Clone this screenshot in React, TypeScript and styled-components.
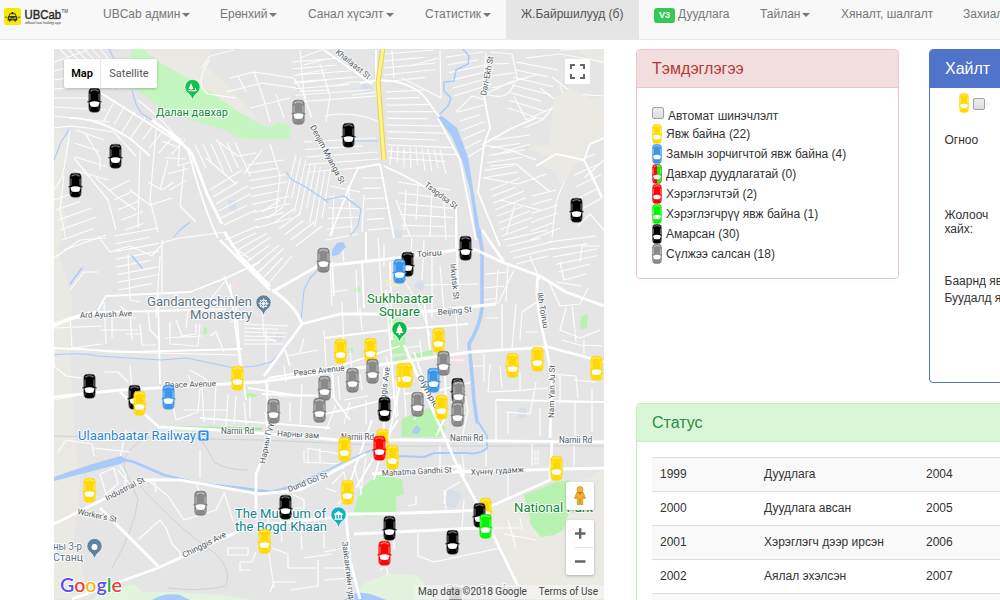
import React from "react";
import styled, { createGlobalStyle } from "styled-components";

const GlobalStyle = createGlobalStyle`
  * { box-sizing: border-box; }
  body {
    margin: 0;
    overflow: hidden;
    background: #fff;
    color: #333;
    font: 12px/17px "Liberation Sans", Arial, sans-serif;
  }
`;

const Page = styled.div`
  width: 1000px;
  height: 600px;
  overflow: hidden;
`;

/* ---------- navigation ---------- */

const Navbar = styled.nav`
  display: flex;
  height: 40px;
  overflow: hidden;
  background: #f8f8f8;
  border-bottom: 1px solid #e7e7e7;
`;

const Brand = styled.a`
  display: flex;
  flex: 0 0 88px;
  padding: 8px 0 0 4px;
`;

const NavItem = styled.a<{ $width: number; $active?: boolean }>`
  display: flex;
  flex: 0 0 ${(p) => p.$width}px;
  align-items: flex-start;
  padding: 6px 0 0 15px;
  white-space: nowrap;
  color: ${(p) => (p.$active ? "#555" : "#777")};
  background: ${(p) => (p.$active ? "#e5e5e5" : "transparent")};
`;

const Caret = styled.span`
  margin: 7px 0 0 2px;
  border: 4px solid transparent;
  border-top-color: #777;
  border-bottom: 0;
`;

const Badge = styled.span`
  width: 21px;
  height: 15px;
  margin: 2px 3px 0 0;
  border-radius: 3px;
  background: #33c955;
  color: #fff;
  font-size: 9px;
  font-weight: 700;
  line-height: 15px;
  text-align: center;
`;

/* ---------- page body ---------- */

const Main = styled.main`
  display: flex;
  gap: 32px;
  padding: 9px 0 0 54px;
`;

const MapBox = styled.section`
  position: relative;
  flex: 0 0 550px;
  height: 551px;
  overflow: hidden;
  background: #e5e5e5;
  font-family: Roboto, sans-serif;
`;

const MapCanvas = styled.svg`
  display: block;
`;

const Control = styled.div`
  position: absolute;
  display: flex;
  align-items: center;
  justify-content: center;
  background: #fff;
  border-radius: 2px;
  box-shadow: 0 1px 3px rgba(0, 0, 0, 0.24);
`;

const MapTypes = styled(Control)`
  left: 10px;
  top: 10px;
  height: 29px;
  font-size: 11px;
`;

const MapType = styled.span<{ $active?: boolean; $width: number }>`
  width: ${(p) => p.$width}px;
  line-height: 29px;
  text-align: center;
  color: ${(p) => (p.$active ? "#000" : "#565656")};
  font-weight: ${(p) => (p.$active ? 600 : 400)};
  & + & {
    border-left: 1px solid #e8e8e8;
  }
`;

const Fullscreen = styled(Control)`
  left: 511px;
  top: 10px;
  width: 25px;
  height: 25px;
  border-radius: 0;
  box-shadow: none;
`;

const Pegman = styled(Control)`
  left: 512px;
  top: 433px;
  width: 28px;
  height: 28px;
`;

const ZoomBar = styled(Control)`
  left: 512px;
  top: 471px;
  width: 28px;
  height: 55px;
`;

const Attribution = styled.div`
  position: absolute;
  right: 0;
  bottom: 1px;
  display: flex;
  justify-content: space-between;
  width: 190px;
  height: 14px;
  padding: 0 6px 0 4px;
  background: rgba(245, 245, 245, 0.7);
  color: #444;
  font-size: 10px;
  line-height: 14px;
  white-space: nowrap;
`;

const Side = styled.div`
  flex: 0 0 520px;
`;

const TopRow = styled.div`
  display: flex;
  align-items: flex-start;
  gap: 30px;
  margin-bottom: 20px;
`;

type Tone = "danger" | "primary" | "success";
const tones: Record<Tone, { bg: string; fg: string; line: string }> = {
  danger: { bg: "#f2dede", fg: "#b33a38", line: "#efc4ce" },
  primary: { bg: "#5074ca", fg: "#ffffff", line: "#5074ca" },
  success: { bg: "#d9f6d6", fg: "#2f8a43", line: "#c5efb9" },
};

const Panel = styled.section<{ $tone: Tone; $width: number; $height: number }>`
  flex: none;
  width: ${(p) => p.$width}px;
  height: ${(p) => p.$height}px;
  overflow: hidden;
  border: 1px solid ${(p) => tones[p.$tone].line};
  border-radius: 4px;
`;

const PanelTitle = styled.h3<{ $tone: Tone }>`
  height: 38px;
  margin: 0;
  padding: 0 15px;
  border-bottom: 1px solid ${(p) => tones[p.$tone].line};
  background: ${(p) => tones[p.$tone].bg};
  color: ${(p) => tones[p.$tone].fg};
  font-size: 16px;
  font-weight: 400;
  line-height: 38px;
`;

const LegendList = styled.div`
  padding: 17px 15px;
`;

const LegendRow = styled.div`
  display: flex;
  align-items: center;
  gap: 4px;
  height: 20px;
  line-height: 20px;
`;

const CheckRow = styled.label`
  display: flex;
  gap: 4px;
  height: 19px;
  line-height: 23px;
`;

const Check = styled.span`
  flex: none;
  width: 12px;
  height: 12px;
  margin-top: 2px;
  border: 1px solid #a3a3a3;
  border-radius: 2px;
  background: linear-gradient(#eee, #dcdcdc);
`;

const SearchBody = styled.div`
  padding: 5px 14.500px;
  line-height: 14px;
`;

const SearchIcons = styled.div`
  display: flex;
  align-items: center;
  gap: 4px;
  height: 20px;
  padding-left: 14px;
`;

const Field = styled.div<{ $gap: number }>`
  width: 60px;
  margin-top: ${(p) => p.$gap}px;
  white-space: pre;
`;

const TableWrap = styled.div`
  padding: 15px;
`;

const StatusRow = styled.div`
  display: grid;
  grid-template-columns: 104px 162px 1fr;
  height: 34px;
  padding-left: 8px;
  border-top: 1px solid #ddd;
  line-height: 32px;
  &:nth-child(odd) {
    background: #f9f9f9;
  }
`;

/* ---------- cars ---------- */

const paint = {
  yellow: "#ffd900",
  blue: "#3d96e8",
  red: "#fb0505",
  green: "#06f506",
  black: "#000000",
  gray: "#8a8a8a",
};
type Colour = keyof typeof paint;

function CarShape({ colour, second }: { colour: Colour; second?: Colour }) {
  const c = paint[colour];
  const dark = colour === "black" || colour === "gray";
  return (
    <g>
      <path d="M0 13.800h14" stroke={c} strokeWidth="1.200" />
      <path
        d="M3 .6Q7-.3 11 .6Q12.700 1.400 12.700 4V20Q12.700 23 11 23.800Q7 24.800 3 23.800Q1.300 23 1.300 20V4Q1.300 1.400 3 .6Z"
        fill={c}
        stroke={dark ? "#555" : c}
        strokeWidth=".5"
      />
      {second && <path d="M7 .3Q12.700 0 12.700 4V20Q12.700 24.400 7 24.400Z" fill={paint[second]} />}
      <path d="M3.400 3.600V2.400Q7 1.200 10.600 2.400V3.600" fill="none" stroke="#fff" strokeOpacity=".7" strokeWidth=".8" />
      <path d="M2.500 5.500V12.500M11.500 5.500V12.500" stroke="#fff" strokeOpacity=".6" strokeWidth=".8" />
      <path d="M2.500 19V21.500M11.500 19V21.500" stroke="#fff" strokeOpacity=".45" strokeWidth=".7" />
      <path d="M1.900 14.400Q7 12 12.100 14.400L10.800 18.600Q7 19.200 3.200 18.600Z" fill="#fff" />
    </g>
  );
}

function CarIcon({ colour, second }: { colour: Colour; second?: Colour }) {
  return (
    <svg width="10" height="20" viewBox=".6 -.3 12.800 25.200" preserveAspectRatio="none">
      <CarShape colour={colour} second={second} />
    </svg>
  );
}

const cars: [Colour, number, number][] = [
  ["black", 94, 100], ["black", 115, 156], ["black", 75, 185], ["gray", 298, 112],
  ["black", 348, 135], ["black", 576, 210], ["black", 465, 248], ["gray", 323, 260],
  ["black", 407, 264], ["blue", 399, 271], ["yellow", 438, 340], ["yellow", 340, 351],
  ["yellow", 370, 350], ["yellow", 537, 359], ["gray", 443, 363], ["yellow", 512, 365],
  ["yellow", 596, 368], ["gray", 372, 371], ["yellow", 402, 375], ["yellow", 406, 375],
  ["yellow", 237, 378], ["gray", 352, 380], ["blue", 433, 380], ["black", 89, 386],
  ["gray", 324, 388], ["black", 457, 390], ["gray", 458, 393], ["black", 134, 397],
  ["blue", 168, 397], ["yellow", 139, 403], ["gray", 417, 404], ["yellow", 441, 407],
  ["black", 384, 409], ["gray", 319, 410], ["gray", 273, 411], ["gray", 457, 414],
  ["yellow", 382, 441], ["red", 379, 448], ["yellow", 344, 449], ["yellow", 392, 457],
  ["yellow", 556, 468], ["yellow", 89, 490], ["yellow", 347, 492], ["gray", 200, 503],
  ["black", 285, 507], ["yellow", 485, 510], ["black", 479, 515], ["green", 485, 526],
  ["black", 389, 528], ["yellow", 264, 541], ["black", 452, 542], ["red", 384, 553],
  ["gray", 455, 599],
];

/* ---------- map geometry ---------- */

// A block of side lanes: n lines between side A-B and side C-D.
const lanes = (a: number[], b: number[], c: number[], d: number[], n: number) => {
  let out = "";
  for (let i = 0; i < n; i++) {
    const t = n === 1 ? 0 : i / (n - 1);
    const x1 = a[0] + (b[0] - a[0]) * t;
    const y1 = a[1] + (b[1] - a[1]) * t;
    const x2 = c[0] + (d[0] - c[0]) * t;
    const y2 = c[1] + (d[1] - c[1]) * t;
    const k = i % 3 === 1 ? 0.8 : 1;
    out += `M${x1.toFixed(1)} ${y1.toFixed(1)}L${(x1 + (x2 - x1) * k).toFixed(1)} ${(y1 + (y2 - y1) * k).toFixed(1)}`;
  }
  return out;
};

const districts = [
  lanes([54, 62], [54, 116], [88, 50], [110, 122], 7),
  lanes([60, 49], [100, 49], [100, 90], [134, 88], 6),
  lanes([115, 100], [185, 140], [102, 124], [168, 158], 8),
  lanes([195, 145], [235, 142], [206, 168], [250, 176], 6),
  lanes([210, 190], [224, 225], [242, 170], [256, 210], 6),
  lanes([247, 165], [256, 228], [284, 160], [292, 218], 9),
  lanes([296, 155], [330, 172], [284, 205], [320, 230], 8),
  lanes([262, 212], [296, 246], [280, 200], [322, 226], 7),
  lanes([54, 200], [64, 250], [82, 190], [106, 235], 6),
  lanes([110, 190], [125, 230], [130, 180], [148, 222], 5),
  lanes([115, 236], [118, 290], [158, 228], [160, 282], 8),
  lanes([225, 240], [268, 284], [258, 226], [292, 256], 9),
  lanes([292, 62], [296, 102], [340, 58], [376, 96], 7),
  lanes([324, 49], [330, 90], [300, 58], [292, 92], 5),
  lanes([304, 142], [308, 172], [376, 138], [380, 166], 5),
  lanes([386, 92], [388, 158], [424, 90], [460, 162], 11),
  lanes([392, 146], [440, 150], [390, 165], [446, 174], 9),
  lanes([384, 54], [384, 82], [434, 50], [436, 76], 5),
  lanes([446, 57], [454, 96], [484, 52], [492, 84], 6),
  lanes([458, 112], [466, 158], [484, 105], [486, 146], 6),
  lanes([490, 52], [492, 88], [512, 54], [516, 82], 4),
  lanes([516, 62], [508, 108], [558, 70], [544, 120], 7),
  lanes([494, 140], [482, 178], [530, 135], [518, 172], 6),
  lanes([490, 190], [502, 236], [520, 178], [534, 224], 8),
  lanes([532, 196], [530, 240], [556, 190], [560, 228], 6),
  lanes([570, 152], [580, 210], [600, 140], [602, 198], 6),
  lanes([504, 240], [516, 264], [548, 230], [556, 254], 5),
  lanes([548, 242], [558, 272], [596, 236], [598, 262], 5),
  lanes([244, 324], [244, 344], [288, 326], [284, 344], 6),
  lanes([362, 178], [368, 230], [384, 178], [390, 228], 6),
  lanes([398, 182], [402, 236], [450, 190], [456, 236], 6),
  lanes([330, 186], [326, 240], [360, 192], [358, 234], 6),
  lanes([560, 50], [570, 110], [604, 48], [560, 86], 3),
  lanes([160, 125], [170, 190], [182, 140], [190, 178], 5),
  lanes([76, 130], [74, 170], [104, 140], [108, 180], 4),
].join("");

const minorRoads = [
  "M54 128L70 126 88 128 114 132 136 156M70 130Q66 160 62 178L54 190M74 158L108 200 116 230M85 133L100 158 100 170",
  "M64 176L60 210 66 240M96 178L116 196 136 210M140 150L138 228M156 130L150 200 158 232M168 160L160 190M180 140L178 166 196 160",
  "M138 100Q164 120 188 150M148 182L162 190 174 182M130 190L150 205 172 198M184 165L180 206 196 222M206 158L236 184M216 140L238 156 256 153",
  "M270 144L280 176 276 212M262 150L244 174M202 68L210 56 234 50M202 88L208 94 236 98M230 78L254 72 294 78 306 98M238 76L246 92M254 72L264 100 270 122",
  "M210 60Q198 76 202 88M226 92L262 83 296 88M250 108L290 98M276 94L284 118M300 50L304 96 312 118M320 64L330 96 326 122",
  "M324 116Q352 110 380 122M336 86L350 82 374 82M352 95L376 92M392 50L394 78M410 66L438 58M440 50L441 98L402 78",
  "M456 112L472 96 486 100M512 54L518 82M486 52L482 96 510 82 540 74M486 94Q508 102 514 84M526 58L560 54 604 62M540 88L558 102 542 120 524 128",
  "M514 96L526 120 552 108M552 77L574 94 604 96M576 160L568 172 556 202 552 238M604 160L584 178M590 170L602 196M578 226L590 214 604 230",
  "M485 145L510 150 536 160M494 155L530 144M484 178L518 184 546 174M500 200L540 210M490 166L516 164 550 192M515 205L506 235",
  "M334 195L332 236M348 185L352 232M364 195L362 232M396 200L410 236M406 190L404 230M418 184L416 220M432 190L430 236M444 202L446 240",
  "M54 258L80 240 106 238M70 290L84 272 98 272M98 236L110 252 130 246 152 256 164 242 180 238 226 232 232 246 252 260 M162 240L162 292M226 280L210 300 190 305",
  "M128 254L130 300 140 302M160 256L156 318M70 316L72 348 102 344M54 328L102 326M78 348L110 352 242 355M104 302L106 344M120 306L130 314 132 340",
  "M140 324L142 345 156 345M148 312L150 330 160 340M176 320L182 336 196 334 196 324M170 322L170 344 198 346 200 324M210 336L216 332 224 352M100 330L138 330M54 348L54 366 66 376 82 378",
  "M112 310L112 338M122 318L136 318M126 334L142 334M165 338L202 336M174 310L212 309M188 310L186 328M230 322L244 318M262 308L264 336 276 342M266 330L266 365",
  "M54 400L76 396M130 365L132 390M104 372L118 372 128 382M188 375L192 384M190 370L204 378 208 382M172 400L176 420 198 412 200 388M202 386L204 422M216 384L214 424M184 410L228 410M228 394L226 426M236 396L234 424M244 402L246 424",
  "M250 396L250 418M268 384L266 426M290 402L290 422M302 384L300 426M278 396L310 396M286 356L318 350M300 352L304 338M284 366L286 382M324 330L326 366M342 302L344 348M360 308L362 330 M330 266L332 306",
  "M330 292L348 290M356 270L358 316M378 238L382 300M384 244L384 266M342 242L344 264M412 238L410 268M424 240L422 280M432 250L432 318M440 266L444 310M456 310L458 350M424 285L478 284M404 280L422 310 430 336",
  "M498 270L496 304M508 264L506 302M514 270L498 304M486 274L508 272M484 288L504 286M484 300L498 298M502 304L502 350M516 304L512 348M486 318L498 318M548 280L560 306 580 304 588 288 M556 282L582 286M566 308L560 330 580 338 600 330",
  "M540 300L522 312 520 340M538 332L526 332M562 340L580 345 602 346M572 304L576 342M584 340L584 354M530 256L540 280M560 262L564 280 586 274M580 262L582 246 600 246",
  "M490 364L488 392 530 390M500 366L502 388M520 372L520 390M484 354L484 382M552 374L576 376 578 398M560 376L560 404M574 380L596 382M536 382L530 414 506 412M524 390L548 388M496 400L496 440M562 402L600 402M592 388L592 432M508 412L508 434M540 408L540 436M575 400L575 436",
  "M450 360L464 360M462 380L468 410 462 438M472 366L484 366M404 348L420 346M420 340L422 360M350 350L352 370M386 356L390 370M360 374L362 390M330 378L332 398M338 376L340 400M344 400L368 396M350 402L344 424M366 400L366 424M396 380L398 416M404 386L406 416M414 420L420 408M336 405L326 430",
  "M58 452L66 440 92 444 94 456M94 448L130 452M120 458L126 430M200 450L200 478M100 474L114 468 118 484 106 494ZM118 470L128 482M120 466L126 475 124 492M148 480L168 496 184 520 216 510 224 494M154 478L156 492M202 500L196 482",
  "M138 540L160 520 166 528 172 544 180 552 180 560M224 492L234 524M306 448L340 454M308 448L308 464M304 450L304 462 340 464M320 448L320 462M292 494L304 500 304 514M294 508L302 508M280 512L282 542M268 518L270 536",
  "M228 548L248 548 248 555 228 555ZM240 562L252 562 256 552M240 562L240 570 250 570M272 548L288 554 288 568 318 568M296 582L274 582 270 592M300 520L302 550M312 528L324 528 324 548M304 558L332 554M318 560L318 586 290 590M268 548L274 588",
  "M332 484L344 472 346 482M326 488L336 492M338 504L344 498M332 470L344 468M354 466L362 494M366 458L360 496M324 552L344 548M324 568L348 568M324 580L350 578M408 506L416 504 416 496M444 490L446 510M464 500L462 528M508 520L516 548",
  "M418 534L418 556 434 562 500 548 M444 504L446 490 460 482M480 528L522 528 520 518M394 550L394 534M504 534L536 540M380 570L386 566 388 574M462 452L464 470M440 446L440 470M486 446L486 466M508 468L508 500M532 444L532 466M574 446L574 466",
].join("");

const secondary = [
  "M54 324Q90 310 98 312L158 311 226 309M98 310L106 296 190 292 226 278 260 262M158 295L160 384M54 348L130 352 242 349",
  "M224 276L236 306 240 356 246 400M70 118Q100 118 132 140L150 156M188 150Q204 210 218 238M96 90L150 124 190 150",
  "M376 50L376 82 384 160M360 83Q400 74 424 96L440 118M324 50L372 84M380 164L394 238M384 166Q420 182 456 206L456 248M380 164L358 168 348 190 330 236",
  "M456 206L458 290M484 96L490 128 484 144 478 192 500 246M438 118L460 160 476 240M482 145L512 128 536 118M536 166L556 154 584 160 602 198M584 160L590 144 604 138",
  "M386 290L396 418M362 262L364 308M332 262L334 296M324 338L390 330 468 324M366 232L366 262M424 300L430 350M390 262L392 340",
  "M268 378L340 366 400 346M266 380L268 410M414 352L434 410M262 394L330 396M200 418L330 428M248 388L300 396M284 346L290 366",
  "M230 284L240 364M372 420L362 448 346 494M402 376L388 440M398 420L384 442 374 480M446 416L436 436M496 400L604 402M444 356L446 400",
  "M384 368L384 440 356 488M324 414L344 410 398 396M404 394L440 390 472 382M332 368L334 398 350 420",
].join("");

const mainRoads = [
  "M54 397L120 390 260 382 330 372 400 362 470 352 548 347 604 362",
  "M54 326Q70 318 100 312M318 266L272 292M272 290Q296 306 302 324L264 376M302 324L340 314 402 314 496 304",
  "M324 266L396 258 456 250 476 250 502 262 540 276 566 292 604 306M482 230L504 262M220 240L270 290",
  "M538 276Q534 300 546 346L552 380 550 438M224 232L240 256 270 286",
  "M160 427L220 430 340 440 400 440 604 442M54 524L110 496 140 480 180 480 260 494 300 490 340 468 366 454",
  "M266 412L270 440 256 474 256 520M100 508L158 566M72 599L158 568 250 526 346 516M346 516L350 560 360 599",
  "M346 514Q400 514 480 510L496 504 550 480 552 440M404 345L460 472 482 512M120 392L160 428",
  "M152 120Q180 140 192 154L208 196 222 224M354 534L480 528M450 472L604 468M372 474L460 466 464 476",
  "M482 512L518 586",
].join("");

type LabelData = [string, number, number, number, number];
// text, x, y, rotation, drawn length
const streetLabels: LabelData[] = [
  ["Khailaast St", 335, 53, 39, 42],
  ["Dari-Ekh St", 486, 96, -79, 40],
  ["Denjim Myanga St", 310, 127, 62, 65],
  ["Tsagdsa St", 424, 186, 37, 39],
  ["Ikh Toiruu", 403, 258, -4, 39],
  ["Irkutsk St", 450, 264, 84, 36],
  ["Ikh Toiruu", 537, 293, 80, 36],
  ["Nam Yan Ju St", 554, 418, -89, 53],
  ["Beijing St", 438, 315, -5, 34],
  ["Ard Ayush Ave", 80, 318, -2, 52],
  ["Peace Avenue", 165, 388, -2, 51],
  ["Peace Avenue", 294, 376, -6, 51],
  ["Chinggis Ave", 383, 417, -82, 50],
  ["Olympic St", 417, 377, 61, 48],
  ["Narnii Rd", 221, 434, 0, 33],
  ["Нарны зам", 277, 436, 3, 42],
  ["Нарны Гүүр", 265, 464, -79, 46],
  ["Narnii Rd", 341, 440, 0, 33],
  ["Narnii Rd", 450, 441, 0, 33],
  ["Narnii Rd", 559, 443, 0, 33],
  ["Dund Gol St", 289, 492, -21, 42],
  ["Industrial St", 107, 501, -27, 43],
  ["Worker's St", 77, 514, 12, 40],
  ["Chinggis Ave", 184, 558, -27, 48],
  ["Mahatma Gandhi St", 382, 476, -3, 70],
  ["Хүннү гудамж", 471, 475, -3, 53],
  ["Зайсангийн гудамж", 342, 542, 83, 74],
];

const placeLabels: [string, number, number, number, string, number][] = [
  ["Далан давхар", 156, 116, 72, "#0a8a38", 11],
  ["Gandantegchinlen", 147, 306, 105, "#5c7385", 13],
  ["Monastery", 190, 319, 62, "#5c7385", 13],
  ["Sukhbaatar", 367, 303, 66, "#0c8a34", 13],
  ["Square", 379, 316, 41, "#0c8a34", 13],
  ["Ulaanbaatar Railway", 78, 440, 118, "#2a84d2", 12.5],
  ["The Museum of", 235, 518, 91, "#12848f", 12.5],
  ["the Bogd Khaan", 235, 531, 92, "#12848f", 12.5],
  ["National Park", 514, 512, 79, "#0c8a34", 12.5],
  ["ны 3-р", 53, 550, 29, "#5c7385", 11.5],
  ["Станц", 53, 561, 30, "#5c7385", 11.5],
  ["River Garden", 446, 594, 74, "#8b9298", 12.5],
];

function Pin({ x, y, fill, children }: { x: number; y: number; fill: string; children: React.ReactNode }) {
  return (
    <g transform={`translate(${x} ${y})`}>
      <path
        d="M0 12Q-1.400 7-5.200 4.600A7.600 7.600 0 1 1 5.200 4.600Q1.400 7 0 12Z"
        fill={fill}
        stroke="#fff"
        strokeWidth=".6"
      />
      {children}
    </g>
  );
}

function CityMap() {
  return (
    <MapCanvas width="550" height="551" viewBox="54 49 550 551">
      <g fill="#ebe9e4">
        <path d="M142 49H212L206 66 232 90 262 123 240 113 160 66Z" />
        <path d="M54 126L70 140 66 160 60 182 66 220 58 250 72 300 70 350 74 430 80 480 74 540 90 599H54Z" />
        <path d="M576 49H604V66L590 60Z" />
        <path d="M604 469L590 478 554 484 494 507 488 534 500 548 521 590 524 600H604Z" />
      </g>
      <path
        fill="#c5f5c0"
        d="M132 49H142L161 63 204 88 241 113 262 126 271 127 277 122 290 125V139H254L240 138 224 130 200 123 164 110 134 88 129 61Z"
      />
      <g fill="#b7f2b0">
        <path d="M389 319H402L407 353 392 354ZM392 358L406 355 407 362 392 363ZM411 355L432 350 434 355 412 360ZM581 316L588 315 587 328 580 329Z" />
        <path d="M402 419L431 407 446 428 442 437H401Z" />
        <path d="M359 492L371 480 379 475 402 479 404 494 396 497V514L367 517 354 512Z" />
        <path d="M524 495L557 482 569 480V512L563 530 554 535 541 537 531 525Z" />
        <path d="M204 328L207 327 207 334 203 334ZM245 396L248 393 258 395 250 399ZM354 289L359 286 361 291 356 293ZM348 349L353 348 353 353 348 353Z" />
      </g>
      <g fill="#e2f3de">
        <path d="M357 600L361 585 387 574 417 575 428 588 434 600Z" />
        <path d="M92 600L104 589 134 584 142 592 177 592 221 595 254 600Z" />
      </g>
      <path d="M166 427L262 429" stroke="#a6eba0" strokeWidth="2.500" />
      <g fill="#f8dfe3">
        <path d="M231 280L235 283 240 279 237 285 240 290 235 287 231 290 232 285ZM171 353H177V358H171ZM455 355H461V364H455ZM54 334L57 336 54 339Z" />
      </g>
      <g fill="#d9dfe9">
        <path d="M362 84L372 86 370 93 360 91ZM228 200L236 200 238 213 229 210ZM394 230L402 230 402 238 394 238ZM418 280L426 284 422 291 414 287ZM445 487L462 494 456 508 444 506ZM518 408H526V418H518ZM276 334L284 334 282 341 274 340Z" />
      </g>
      <g fill="none" stroke="#cfd1d3" strokeWidth="1">
        <path d="M54 436L260 440 400 446 604 446" />
        <path d="M142 440Q118 456 126 472T138 500Q134 530 112 568M192 430Q206 444 214 462 226 470 248 470M140 486Q180 530 216 554 232 570 226 586 200 592 168 588" />
      </g>
      <g fill="none" stroke="#fdfdfd" strokeLinejoin="round">
        <path d={districts} strokeWidth="1.100" />
        <path d={minorRoads} strokeWidth="1.200" />
      </g>
      <path
        fill="#ebe9e4"
        d="M554 98L571 88 590 99 604 98V137L590 144 582 158 570 170 562 186 554 170 537 165 548 157 532 149 534 144 548 146 552 120Z"
      />
      <path d={secondary} fill="none" stroke="#fff" strokeWidth="1.800" strokeLinejoin="round" />
      <g fill="none" stroke="#a8cbfc" strokeLinejoin="round" strokeLinecap="round">
        <path
          strokeWidth="1.100"
          d="M109 49L113 57 116 62 128 78M132 90L136 104 141 113 152 120M54 160L61 142 69 130M54 355Q80 352 97 356L161 360 187 358 234 368 256 366 271 362 287 347M301 320L304 290 310 278 318 270M286 172L292 180 304 186 316 194 328 202M324 200L344 196 361 209 358 226 350 236M356 141L378 141M174 237L180 230 190 222"
        />
        <path strokeWidth="1.500" d="M463 49L469 56 468 64 456 70 454 81 444 82 444 91 451 98 448 106 440 114M70 284L82 268M132 256L142 268" />
        <path strokeWidth="3.600" d="M479 230L482 250V308Q480 326 469 344L472 376 474 400 477 422" />
        <path strokeWidth="1.900" d="M477 420L487 436V448Q480 455 466 453L434 453 424 457 397 456 372 450 344 462 324 472" />
        <path strokeWidth="2.800" d="M324 472L294 486 271 492 240 488 201 484 164 475 134 462 121 459" />
      </g>
      <g fill="#a8cbfc">
        <path d="M438 117L442 116 457 128 468 157 481 238 477 238 470 190 462 160 452 137Z" />
        <path d="M54 477Q90 464 121 456L128 460 120 464 54 481Z" />
        <path d="M332 250L337 243 343 242 346 247 338 255 332 256Z" />
        <path d="M413 429L417 425 421 429 418 434 412 433Z" />
        <path d="M344 600Q356 588 376 596L386 600ZM152 600Q164 592 180 595L190 600Z" />
      </g>
      <path d={mainRoads} fill="none" stroke="#fff" strokeWidth="2.800" strokeLinejoin="round" />
      <path d="M532 450v14M535 450v14M538 450v14M532 454h6M532 459h6M532 464h6" stroke="#f5f5f5" strokeWidth="1.200" />
      <path d="M383 48L378 82 384 160" fill="none" stroke="#e9d34f" strokeWidth="5" />
      <path d="M383 48L378 82 384 160" fill="none" stroke="#fff48a" strokeWidth="3" />
      <path d="M384 280L400 282M386 284L400 286" stroke="#f6efc6" strokeWidth="2" />

      <g fontFamily="Roboto, sans-serif" stroke="#fff" strokeWidth="2" strokeLinejoin="round" paintOrder="stroke">
        {streetLabels.map(([text, x, y, angle, length], i) => (
          <text
            key={i}
            transform={`translate(${x} ${y}) rotate(${angle})`}
            fontSize="8.200"
            fill="#4f5963"
            textLength={length}
            lengthAdjust="spacingAndGlyphs"
            strokeOpacity=".8"
          >
            {text}
          </text>
        ))}
        {placeLabels.map(([text, x, y, length, fill, size]) => (
          <text key={text} x={x} y={y} fontSize={size} fill={fill} textLength={length} lengthAdjust="spacingAndGlyphs">
            {text}
          </text>
        ))}
      </g>

      <Pin x={192.5} y={88} fill="#12c24c">
        <path d="M-1.500-5L-4 1H-2V3H-1V1H1ZM0 2H4V3.200H-4V2ZM2.500 0H3.500V2H2.500Z" fill="#fff" />
      </Pin>
      <Pin x={399.5} y={330} fill="#12b745">
        <path d="M0-6L-3 0H-2L-4 3H-.8V5H.8V3H4L2 0H3Z" fill="#fff" />
      </Pin>
      <Pin x={263.5} y={303.5} fill="#64839b">
        <circle r="3.400" fill="none" stroke="#fff" strokeWidth="1.300" strokeDasharray="1.700 1" />
        <path d="M-5 0H5M0-5V5M-3.500-3.500L3.500 3.500M-3.500 3.500L3.500-3.500" stroke="#fff" strokeWidth=".8" />
      </Pin>
      <Pin x={338.5} y={515.5} fill="#12b0c4">
        <path d="M-4.500-1.500L0-4.500 4.500-1.500V-.6H-4.500ZM-4 3H4V4.200H-4ZM-3.500-.6H-2.200V3H-3.500ZM-.6-.6H.6V3H-.6ZM2.200-.6H3.500V3H2.200Z" fill="#fff" />
      </Pin>
      <Pin x={94.5} y={547} fill="#64839b">
        <circle r="3" fill="#fff" />
      </Pin>
      <rect x="198.500" y="430.500" width="10" height="10" rx="1.500" fill="#2a8ee8" />
      <path d="M200.500 432H206.500V438H205.500L206.500 439.500H205L204.500 438.500H202.500L202 439.500H200.500L201.500 438H200.500Z" fill="#fff" />
      <path d="M201.500 433.200H205.500V435H201.500ZM201.600 436H202.600V437H201.600ZM204.400 436H205.400V437H204.400Z" fill="#2a8ee8" />

      {cars.map(([colour, x, y], i) => (
        <g key={i} transform={`translate(${x - 6.5} ${y - 12})`}>
          <CarShape colour={colour} />
        </g>
      ))}

      <text
        x="60"
        y="592"
        fontFamily="Lato, sans-serif"
        fontSize="19.500"
        fontWeight="600"
        textLength="62"
        lengthAdjust="spacingAndGlyphs"
        stroke="#fff"
        strokeWidth="2"
        paintOrder="stroke"
      >
        <tspan fill="#5a50f0">G</tspan>
        <tspan fill="#ee4135">o</tspan>
        <tspan fill="#f4bb12">o</tspan>
        <tspan fill="#5a50f0">g</tspan>
        <tspan fill="#2fae50">l</tspan>
        <tspan fill="#ee4135">e</tspan>
      </text>
    </MapCanvas>
  );
}

function Logo() {
  return (
    <svg width="66" height="18" viewBox="0 0 66 18">
      <rect width="17" height="17" rx="2.500" fill="#f8e808" />
      <path d="M7.500 4H9.500V5.200H7.500ZM4.500 8L5.800 5.300H11.200L12.500 8 13.300 9V12.500H12V13.500H10.500V12.500H6.500V13.500H5V12.500H3.700V9Z" fill="#35351d" />
      <path d="M.8 9.200H3M14 9.200H16.200" stroke="#35351d" strokeWidth=".8" />
      <path d="M6.200 6.300H10.800L11.500 8H5.500ZM5 9.500H6.700V10.700H5ZM10.300 9.500H12V10.700H10.300ZM7.500 10.300H9.500V11.300H7.500Z" fill="#f8e808" />
      <text x="20.500" y="10.500" fontFamily="Liberation Sans, sans-serif" fontSize="12.500" fill="#2c2c2c" stroke="#2c2c2c" strokeWidth=".45" textLength="36.500" lengthAdjust="spacingAndGlyphs">
        UBCab
      </text>
      <text x="57.500" y="4.500" fontFamily="Liberation Sans, sans-serif" fontSize="4.500" fill="#333" textLength="6.500" lengthAdjust="spacingAndGlyphs">
        TM
      </text>
      <text x="21" y="16" fontFamily="Liberation Sans, sans-serif" fontSize="4" fontStyle="italic" fill="#333" textLength="36" lengthAdjust="spacingAndGlyphs">
        official taxi hailing app
      </text>
    </svg>
  );
}

const menu: { label: string; width: number; caret?: boolean; active?: boolean; badge?: string }[] = [
  { label: "UBCab админ", width: 117, caret: true },
  { label: "Ерөнхий", width: 88, caret: true },
  { label: "Санал хүсэлт", width: 117, caret: true },
  { label: "Статистик", width: 96, caret: true },
  { label: "Ж.Байршилууд (б)", width: 133, active: true },
  { label: "Дуудлага", width: 106, badge: "V3" },
  { label: "Тайлан", width: 81, caret: true },
  { label: "Хяналт, шалгалт", width: 122 },
  { label: "Захиалга", width: 90 },
];

const legend: { text: string; colour: Colour; second?: Colour }[] = [
  { text: "Явж байна (22)", colour: "yellow" },
  { text: "Замын зорчигчтой явж байна (4)", colour: "blue" },
  { text: "Давхар дуудлагатай (0)", colour: "red", second: "green" },
  { text: "Хэрэглэгчтэй (2)", colour: "red" },
  { text: "Хэрэглэгчрүү явж байна (1)", colour: "green" },
  { text: "Амарсан (30)", colour: "black" },
  { text: "Сүлжээ салсан (18)", colour: "gray" },
];

const statuses = [
  ["1999", "Дуудлага", "2004"],
  ["2000", "Дуудлага авсан", "2005"],
  ["2001", "Хэрэглэгч дээр ирсэн", "2006"],
  ["2002", "Аялал эхэлсэн", "2007"],
  ["", "", ""],
];

export default function App() {
  return (
    <Page>
      <GlobalStyle />
      <Navbar>
        <Brand>
          <Logo />
        </Brand>
        {menu.map((item) => (
          <NavItem key={item.label} $width={item.width} $active={item.active}>
            {item.badge && <Badge>{item.badge}</Badge>}
            {item.label}
            {item.caret && <Caret />}
          </NavItem>
        ))}
      </Navbar>
      <Main>
        <MapBox>
          <CityMap />
          <MapTypes>
            <MapType $active $width={36}>Map</MapType>
            <MapType $width={57}>Satellite</MapType>
          </MapTypes>
          <Fullscreen>
            <svg width="15" height="15" viewBox="0 0 15 15" fill="none" stroke="#666" strokeWidth="2">
              <path d="M1 5V1H5M10 1H14V5M14 10V14H10M5 14H1V10" />
            </svg>
          </Fullscreen>
          <Pegman>
            <svg width="14" height="20" viewBox="0 0 14 20">
              <path d="M4 6H10L12.500 12 11 13 9.800 10.500V18.500H4.200V10.500L3 13 1.500 12Z" fill="#f2b22c" stroke="#b98319" strokeWidth=".6" />
              <circle cx="7" cy="3.500" r="3" fill="#f5b62e" stroke="#b98319" strokeWidth=".6" />
              <path d="M5 6H9L7 9Z" fill="#e2622b" />
              <path d="M7 12V18" stroke="#b98319" />
            </svg>
          </Pegman>
          <ZoomBar>
            <svg width="28" height="55" viewBox="0 0 28 55" stroke="#666" strokeWidth="2.400">
              <path d="M9 13.500H19.500M14.200 8.300V18.700M9 41.500H19.500" />
              <path d="M9 27.500H27" stroke="#e2e2e2" strokeWidth="1" />
            </svg>
          </ZoomBar>
          <Attribution>
            <span>Map data ©2018 Google</span>
            <span>Terms of Use</span>
          </Attribution>
        </MapBox>
        <Side>
          <TopRow>
            <Panel $tone="danger" $width={263} $height={230}>
              <PanelTitle $tone="danger">Тэмдэглэгээ</PanelTitle>
              <LegendList>
                <CheckRow>
                  <Check />
                  Автомат шинэчлэлт
                </CheckRow>
                {legend.map((row) => (
                  <LegendRow key={row.text}>
                    <CarIcon colour={row.colour} second={row.second} />
                    {row.text}
                  </LegendRow>
                ))}
              </LegendList>
            </Panel>
            <Panel $tone="primary" $width={263} $height={334}>
              <PanelTitle $tone="primary">Хайлт</PanelTitle>
              <SearchBody>
                <SearchIcons>
                  <CarIcon colour="yellow" />
                  <Check />
                </SearchIcons>
                <Field $gap={20}>Огноо</Field>
                <Field $gap={61}>{"Жолооч\nхайх:"}</Field>
                <Field $gap={38}>Баарнд явсан</Field>
                <Field $gap={3}>Буудалд явсан</Field>
              </SearchBody>
            </Panel>
          </TopRow>
          <Panel $tone="success" $width={520} $height={260}>
            <PanelTitle $tone="success">Статус</PanelTitle>
            <TableWrap>
              {statuses.map((row, i) => (
                <StatusRow key={i}>
                  {row.map((cell, j) => (
                    <span key={j}>{cell}</span>
                  ))}
                </StatusRow>
              ))}
            </TableWrap>
          </Panel>
        </Side>
      </Main>
    </Page>
  );
}
